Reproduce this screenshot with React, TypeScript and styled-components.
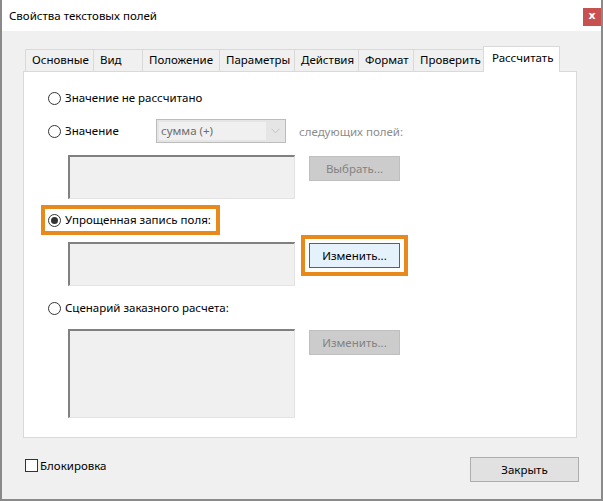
import React from "react";
import styled, { createGlobalStyle } from "styled-components";

const GlobalStyle = createGlobalStyle`
  html, body {
    margin: 0;
    padding: 0;
    background: #ffffff;
  }
  * {
    box-sizing: border-box;
  }
`;

const tabs = [
  { label: "Основные", width: 68 },
  { label: "Вид", width: 49 },
  { label: "Положение", width: 77 },
  { label: "Параметры", width: 75 },
  { label: "Действия", width: 64 },
  { label: "Формат", width: 55 },
  { label: "Проверить", width: 70 },
];

export default function App() {
  return (
    <Frame>
      <GlobalStyle />
      <TitleBar>
        <Title>Свойства текстовых полей</Title>
        <CloseX>x</CloseX>
      </TitleBar>
      <Body>
        <TabBar>
          {tabs.map((t) => (
            <Tab key={t.label} $w={t.width}>
              {t.label}
            </Tab>
          ))}
          <ActiveTab>Рассчитать</ActiveTab>
        </TabBar>
        <Panel>
          <RadioRow $top={18}>
            <Radio />
            <Label>Значение не рассчитано</Label>
          </RadioRow>

          <RadioRow $top={13} $h={24}>
            <Radio />
            <Label $w={91}>Значение</Label>
            <Combo>
              <ComboText>сумма (+)</ComboText>
              <ComboArrow>
                <svg width="9" height="6" viewBox="0 0 9 6">
                  <path d="M0.5 0.8 L4.5 4.8 L8.5 0.8" fill="none" stroke="#c4c4c4" strokeWidth="1" />
                </svg>
              </ComboArrow>
            </Combo>
            <MutedLabel>следующих полей:</MutedLabel>
          </RadioRow>

          <FieldBlock $top={12}>
            <Field $h={44} />
            <Button $disabled>Выбрать...</Button>
          </FieldBlock>

          <RadioRow $top={13}>
            <Highlight>
              <Radio $checked />
              <Label>Упрощенная запись поля:</Label>
            </Highlight>
          </RadioRow>

          <FieldBlock $top={14}>
            <Field $h={44} />
            <Button $focused>Изменить...</Button>
          </FieldBlock>

          <RadioRow $top={14}>
            <Radio />
            <Label>Сценарий заказного расчета:</Label>
          </RadioRow>

          <FieldBlock $top={13}>
            <Field $h={89} />
            <Button $disabled>Изменить...</Button>
          </FieldBlock>
        </Panel>

        <Footer>
          <CheckRow>
            <Checkbox />
            <Label>Блокировка</Label>
          </CheckRow>
          <CloseButton>Закрыть</CloseButton>
        </Footer>
      </Body>
    </Frame>
  );
}

const Frame = styled.div`
  width: 603px;
  height: 501px;
  background: #f0f0f0;
  border: 2px solid #8a8a8a;
  border-top: none;
  font-family: "Noto Sans", "Liberation Sans", sans-serif;
  font-size: 11.5px;
  color: #000;
  display: flex;
  flex-direction: column;
`;

const TitleBar = styled.div`
  height: 31px;
  background: #ffffff;
  display: flex;
  align-items: flex-start;
  justify-content: space-between;
  padding-left: 7px;
`;

const Title = styled.div`
  margin-top: 7px;
  line-height: 17px;
`;

const CloseX = styled.div`
  width: 18px;
  height: 18px;
  margin-top: 8px;
  background: #c75050;
  color: #ffffff;
  font-weight: bold;
  font-size: 11px;
  line-height: 16px;
  text-align: center;
  font-family: "DejaVu Sans", sans-serif;
`;

const Body = styled.div`
  flex: 1;
  padding: 15px 24px 0 21px;
`;

const TabBar = styled.div`
  display: flex;
  align-items: flex-end;
  height: 25px;
  padding-left: 2px;
  position: relative;
  z-index: 1;
`;

const Tab = styled.div<{ $w: number }>`
  flex-shrink: 0;
  width: ${(p) => p.$w + 1}px;
  height: 22px;
  border: 1px solid #d9d9d9;
  border-bottom: none;
  margin-right: -1px;
  background: #f0f0f0;
  padding-left: 6px;
  line-height: 20px;
  white-space: nowrap;
`;

const ActiveTab = styled.div`
  flex-shrink: 0;
  width: 77px;
  height: 26px;
  margin-bottom: -1px;
  border: 1px solid #d9d9d9;
  border-bottom: none;
  background: #ffffff;
  padding-left: 8px;
  line-height: 21px;
  white-space: nowrap;
`;

const Panel = styled.div`
  width: 554px;
  height: 367px;
  background: #ffffff;
  border: 1px solid #d9d9d9;
  padding-left: 24px;
  display: flex;
  flex-direction: column;
`;

const RadioRow = styled.div<{ $top: number; $h?: number }>`
  margin-top: ${(p) => p.$top}px;
  height: ${(p) => p.$h ?? 16}px;
  display: flex;
  align-items: center;
`;

const Highlight = styled.div`
  display: flex;
  align-items: center;
  height: 16px;
  padding-right: 2px;
  outline: 4px solid #e8891c;
  outline-offset: 3px;
`;

const Radio = styled.span<{ $checked?: boolean }>`
  width: 13px;
  height: 13px;
  border-radius: 50%;
  border: 1px solid #333333;
  background: #ffffff;
  display: flex;
  align-items: center;
  justify-content: center;
  flex-shrink: 0;

  &::after {
    content: "";
    display: ${(p) => (p.$checked ? "block" : "none")};
    width: 7px;
    height: 7px;
    border-radius: 50%;
    background: #333333;
  }
`;

const Label = styled.span<{ $w?: number }>`
  margin-left: 4px;
  line-height: 16px;
  white-space: nowrap;
  ${(p) => (p.$w ? `width: ${p.$w}px; flex-shrink: 0;` : "")}
`;

const MutedLabel = styled.span`
  margin-left: 13px;
  color: #8c8c8c;
  white-space: nowrap;
`;

const Combo = styled.div`
  width: 130px;
  height: 24px;
  border: 1px solid #bcbcbc;
  background: #e5e5e5;
  display: flex;
  align-items: stretch;
`;

const ComboText = styled.div`
  width: 107px;
  margin: 2px 0 2px 2px;
  background: #f0f0f0;
  color: #6d6d6d;
  line-height: 18px;
  padding-left: 2px;
`;

const ComboArrow = styled.div`
  flex: 1;
  display: flex;
  align-items: center;
  justify-content: center;
`;

const FieldBlock = styled.div<{ $top: number }>`
  margin-top: ${(p) => p.$top}px;
  margin-left: 20px;
  display: flex;
  align-items: flex-start;
`;

const Field = styled.div<{ $h: number }>`
  width: 227px;
  height: ${(p) => p.$h}px;
  background: #f0f0f0;
  border-top: 2px solid #808080;
  border-left: 2px solid #808080;
  border-right: 1px solid #e3e3e3;
  border-bottom: 1px solid #e3e3e3;
`;

const Button = styled.div<{ $disabled?: boolean; $focused?: boolean }>`
  margin-left: 14px;
  margin-top: 1px;
  width: 91px;
  height: 25px;
  display: flex;
  align-items: center;
  justify-content: center;
  border: 1px solid ${(p) => (p.$focused ? "#0078d7" : "#bfbfbf")};
  background: ${(p) => (p.$focused ? "#e5f1fb" : "#cccccc")};
  color: ${(p) => (p.$disabled ? "#838383" : "#000000")};
  ${(p) => (p.$focused ? "outline: 4px solid #e8891c; outline-offset: 4px;" : "")}
`;

const Footer = styled.div`
  margin-top: 19px;
  margin-right: -2px;
  display: flex;
  justify-content: space-between;
  align-items: flex-start;
`;

const CheckRow = styled.div`
  margin-top: 2px;
  margin-left: 2px;
  display: flex;
  align-items: center;
  height: 13px;
`;

const Checkbox = styled.span`
  width: 13px;
  height: 13px;
  border: 1px solid #333333;
  background: #ffffff;
  margin-right: -2px;
`;

const CloseButton = styled.div`
  width: 109px;
  height: 25px;
  background: #e1e1e1;
  border: 1px solid #adadad;
  display: flex;
  align-items: center;
  justify-content: center;
`;
